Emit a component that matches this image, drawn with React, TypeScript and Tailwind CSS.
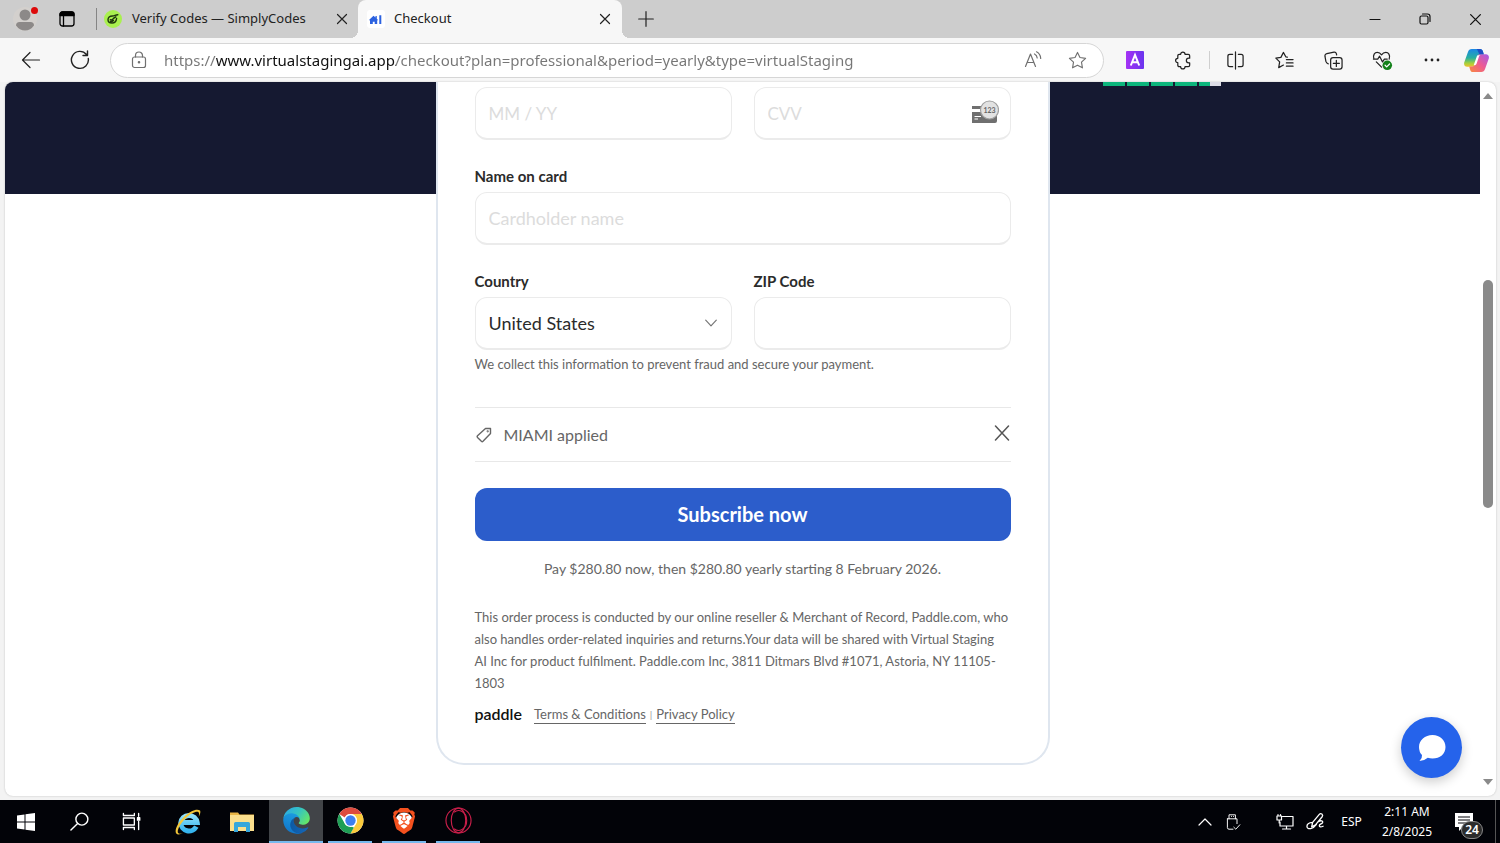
import React from "react";
import { SiBrave } from "react-icons/si";

type IconProps = { className?: string };

function Line({ className = "", children, box = 20, width = 1.2 }: { className?: string; children: React.ReactNode; box?: number; width?: number }) {
  return (
    <svg
      viewBox={`0 0 ${box} ${box}`}
      className={className}
      fill="none"
      stroke="currentColor"
      strokeWidth={width}
      strokeLinecap="round"
      strokeLinejoin="round"
      aria-hidden="true"
    >
      {children}
    </svg>
  );
}

const CloseMark = ({ className }: IconProps) => (
  <Line box={12} className={className}>
    <path d="M1.5 1.5 10.5 10.5M10.5 1.5 1.5 10.5" />
  </Line>
);

function EdgeLogo() {
  return (
    <svg viewBox="0 0 256 260" className="size-[27px]" aria-hidden="true">
      <defs>
        <linearGradient id="edgeA" x1="0" x2="1">
          <stop offset="0" stopColor="#0c59a4" />
          <stop offset="1" stopColor="#1667b7" />
        </linearGradient>
        <linearGradient id="edgeB" x1="0.6" y1="0" x2="0.3" y2="1">
          <stop offset="0" stopColor="#1b9de2" />
          <stop offset="1" stopColor="#1174c8" />
        </linearGradient>
        <linearGradient id="edgeC" x1="0" y1="0.2" x2="1" y2="0.7">
          <stop offset="0" stopColor="#2aa9e8" />
          <stop offset="0.5" stopColor="#36c4c0" />
          <stop offset="1" stopColor="#66e865" />
        </linearGradient>
      </defs>
      <path fill="url(#edgeA)" d="M235.68 195.46a93.73 93.73 0 0 1-10.54 4.71 101.87 101.87 0 0 1-35.9 6.46c-47.32 0-88.54-32.55-88.54-74.32A31.48 31.48 0 0 1 117.13 105c-42.8 1.8-53.8 46.4-53.8 72.53 0 73.88 68.09 81.37 82.76 81.37 7.91 0 19.84-2.3 27-4.56l1.31-.44a128.34 128.34 0 0 0 66.6-52.8 4 4 0 0 0-5.32-5.64z" />
      <path fill="url(#edgeB)" d="M105.73 241.42A79.2 79.2 0 0 1 83 220.08a80.72 80.72 0 0 1 29.49-120c3.12-1.47 8.45-4.13 15.54-4a32.35 32.35 0 0 1 25.69 13 31.88 31.88 0 0 1 6.36 18.66c0-.21 24.46-79.6-80-79.6-43.9 0-80 41.66-80 78.21a130.15 130.15 0 0 0 12.11 56 128 128 0 0 0 156.38 67.11 75.55 75.55 0 0 1-62.78-8z" />
      <path fill="url(#edgeC)" d="M152.33 148.86c-.81 1.05-3.3 2.5-3.3 5.66 0 2.61 1.7 5.12 4.72 7.23 14.38 10 41.49 8.68 41.56 8.68a59.56 59.56 0 0 0 30.27-8.35A61.38 61.38 0 0 0 256 109.19c.26-22.41-8-37.31-11.34-43.91C223.46 23.84 177.72 0 128 0A128 128 0 0 0 0 126.2c.48-36.54 36.8-66.05 80-66.05 3.5 0 23.46.34 42 10.07 16.34 8.58 24.9 18.94 30.85 29.21 6.18 10.67 7.28 24.15 7.28 29.52s-2.74 13.33-7.8 19.91z" />
    </svg>
  );
}

function ChromeLogo() {
  return (
    <svg viewBox="0 0 48 48" className="size-[27px]" aria-hidden="true">
      <circle cx="24" cy="24" r="23" fill="#fff" />
      <path fill="#dd4b3e" d="M24 1a23 23 0 0 1 19.92 11.5H24a11.5 11.5 0 0 0-10.2 6.2L4.08 12.5A23 23 0 0 1 24 1z" />
      <path fill="#1e9e55" d="M4.08 12.5 14.04 29.75A11.5 11.5 0 0 0 25.6 35.4L24 47A23 23 0 0 1 4.08 12.5z" />
      <path fill="#fbcb3c" d="M43.92 12.5A23 23 0 0 1 24 47l9.96-17.25A11.5 11.5 0 0 0 24 12.5z" />
      <path fill="#1e9e55" d="M24 47l6-10.500-4-1.500-9.500-2L18 46.2z" />
      <circle cx="24" cy="24" r="11.5" fill="#fff" />
      <circle cx="24" cy="24" r="9.2" fill="#3d7ff0" />
    </svg>
  );
}

function ExplorerE() {
  return (
    <svg viewBox="0 0 26 26" className="size-[26px]" aria-hidden="true">
      <defs>
        <linearGradient id="ieBlue" x1="0" y1="0" x2="0" y2="1">
          <stop offset="0" stopColor="#8fe0fb" />
          <stop offset="1" stopColor="#35b4ee" />
        </linearGradient>
      </defs>
      <path fill="none" stroke="url(#ieBlue)" strokeWidth="5" d="M7 13.6H22.2A8.3 8.3 0 0 0 5.7 14a8.3 8.3 0 0 0 15.6 3.6" />
      <path fill="#f3c63a" d="M25 1.6C22.4-.8 15.6 1.6 9.3 7.5 2.7 13.7-1 21.6 1.300 24.5c1.200 1.500 3.900 1.100 6.700-.4-2.600.8-4.300.8-5-.3C1.800 21.600 5 14.800 10.700 9.300 16 4.200 21.500 1.800 23.500 3.200c.9.700.8 2.400.1 4.500 1.600-2.600 2.200-5 1.400-6.100z" />
    </svg>
  );
}

function FolderLogo() {
  return (
    <svg viewBox="0 0 24 22" className="h-[22px] w-6" aria-hidden="true">
      <path fill="#e9b544" d="M0 1.500h8l1.500 2H24V8H0z" />
      <path fill="#fbdf8d" d="M0 4h24v16H0z" />
      <path fill="#37a7dc" d="M4 12.500q0-1.500 1.500-1.500h13q1.500 0 1.500 1.500V21h-4v-5H8v5H4z" />
    </svg>
  );
}

function OperaLogo() {
  return (
    <svg viewBox="0 0 28 28" className="size-[27px]" fill="none" stroke="#c91f4a" strokeWidth="1.200" aria-hidden="true">
      <circle cx="14" cy="14" r="13" />
      <ellipse cx="14" cy="14" rx="7.500" ry="12.800" />
      <path d="M9.500 5.500C14 1.500 22.500 4.500 22.500 14S14 26.500 9.500 22.500" />
    </svg>
  );
}

function CopilotLogo() {
  return (
    <svg viewBox="0 0 24 22" className="h-[23px] w-[25px]" aria-hidden="true">
      <defs>
        <linearGradient id="cpA" x1="0" y1="0" x2="0" y2="1">
          <stop offset="0" stopColor="#1a86e6" />
          <stop offset="0.500" stopColor="#27b0a0" />
          <stop offset="0.800" stopColor="#a5cf3c" />
          <stop offset="1" stopColor="#f0c22c" />
        </linearGradient>
        <linearGradient id="cpB" x1="1" y1="0" x2="0" y2="1">
          <stop offset="0" stopColor="#a35be8" />
          <stop offset="0.500" stopColor="#ee5a92" />
          <stop offset="1" stopColor="#f98a3d" />
        </linearGradient>
      </defs>
      <path fill="url(#cpA)" d="M7.500 0h8c1.400 0 2.200.9 2.600 2.200l.9 3h-2.500c-1.600 0-2.500.9-3 2.500l-2.400 7.600c-.4 1.200-1.200 1.700-2.400 1.700H3C.8 17-.3 15.200.2 13L3.800 2.800C4.400 1 5.500 0 7.500 0z" />
      <path fill="url(#cpB)" d="M16.500 22h-8c-1.400 0-2.200-.9-2.600-2.200l-.9-3h2.500c1.600 0 2.500-.9 3-2.500l2.400-7.600c.4-1.200 1.200-1.700 2.400-1.700H21c2.200 0 3.300 1.800 2.800 4l-3.600 10.200c-.6 1.800-1.700 2.800-3.700 2.800z" />
      <path fill="#1d4fc4" d="M15 0c1.600 0 2.600.8 3.100 2.200l.9 2.900h-3.500C14 5 13.500 1 12 0z" />
      <path fill="#fff" d="M12.600 6.200 9.300 15.600c2 0 2.500-.8 3-2.200l1.800-5.300c.3-1.200.9-2 2-2.300z" />
    </svg>
  );
}

function ToolButton({ label, narrow, children }: { label: string; narrow?: boolean; children: React.ReactNode }) {
  return (
    <button
      type="button"
      aria-label={label}
      className={`flex h-9 shrink-0 items-center justify-center text-[#222] ${narrow ? "w-10" : "w-[49px]"}`}
    >
      {children}
    </button>
  );
}

function TabStrip() {
  return (
    <header className="flex h-[38px] shrink-0 items-center bg-[#cdcdcd]">
      <button type="button" aria-label="Profile" className="relative flex w-[50px] justify-center">
        <svg viewBox="0 0 24 24" className="size-6" aria-hidden="true">
          <circle cx="12" cy="12" r="12" fill="#d3d0cd" />
          <circle cx="12" cy="8" r="5.500" fill="#8c8988" />
          <path fill="#8c8988" d="M3 18.500q0-3.500 3.500-3.500h11q3.500 0 3.500 3.500-3.500 5-9 5t-9-5z" />
        </svg>
        <span className="absolute right-3 top-0 size-[7px] rounded-full bg-[#dd0a0a]" />
      </button>
      <button type="button" aria-label="Tab actions" className="flex w-[34px] justify-center text-black">
        <Line className="size-4" box={16} width={1.300}>
          <rect x="1" y="1" width="14" height="14" rx="2.500" />
          <path d="M1 3.500Q1 1 3.500 1h9Q15 1 15 3.500V4.500H1z" fill="currentColor" />
          <path d="M4.500 5v10" />
        </Line>
      </button>
      <span className="ml-3 h-[22px] w-px bg-[#858585]" />
      <nav aria-label="Tabs" className="flex h-full items-center">
        <div className="flex w-[261px] items-center pl-[7px] pr-[7px]">
          <svg viewBox="0 0 18 18" className="size-[18px] shrink-0" aria-hidden="true">
            <circle cx="9" cy="9" r="9" fill="#a9f04f" />
            <path
              d="M13.800 4.800C11.500 4.800 10.500 6 8.500 6 5.500 6 4 7.500 4 9.800S5.500 13 8 13s4.300-1.500 4.600-4.600M6.300 9.800q2 .5 3.200-1.500l2.300-1.500M6.500 11.400q1.800.2 3-1"
              stroke="#20380d"
              strokeWidth="1.400"
              strokeLinecap="round"
              fill="none"
            />
          </svg>
          <a href="#verify" className="ml-[10px] grow whitespace-nowrap font-['Noto_Sans',sans-serif] text-[13px] text-[#222]">
            Verify Codes — SimplyCodes
          </a>
          <button type="button" aria-label="Close Verify Codes" className="flex size-[18px] items-center justify-center text-[#222]">
            <CloseMark className="size-3" />
          </button>
        </div>
        <div className="relative flex h-full w-[264px] items-center rounded-t-lg bg-[#f7f7f7] pl-[9px] pr-2 before:absolute before:-left-2 before:bottom-0 before:size-2 before:bg-[radial-gradient(circle_at_0_0,transparent_8px,#f7f7f7_8px)] after:absolute after:-right-2 after:bottom-0 after:size-2 after:bg-[radial-gradient(circle_at_100%_0,transparent_8px,#f7f7f7_8px)]">
          <svg viewBox="0 0 18 18" className="size-[18px] shrink-0" aria-hidden="true">
            <rect width="18" height="18" rx="3" fill="#fff" />
            <path fill="#2c62e0" d="M2 10 6.500 5.800l2 1.800V6h1.300v2.800L11 10l-.8.600V14H7.700v-2.200H5.800V14H3V10.600zM12.300 5.300h2V14h-2z" />
          </svg>
          <a href="#checkout" className="ml-[9px] grow font-['Noto_Sans',sans-serif] text-[13px] text-[#222]">
            Checkout
          </a>
          <button type="button" aria-label="Close Checkout" className="flex size-[18px] items-center justify-center text-[#222]">
            <CloseMark className="size-3" />
          </button>
        </div>
      </nav>
      <button type="button" aria-label="New tab" className="flex w-12 justify-center text-[#222]">
        <Line className="size-4" box={16}>
          <path d="M8 .7v14.600M.7 8h14.600" />
        </Line>
      </button>
      <div className="ml-auto flex text-[#111]">
        <button type="button" aria-label="Minimize" className="flex w-[50px] justify-center">
          <Line className="size-3" box={12}>
            <path d="M1 6.500h10" />
          </Line>
        </button>
        <button type="button" aria-label="Restore" className="flex w-[50px] justify-center">
          <Line className="size-3" box={12}>
            <rect x="1" y="3" width="8" height="8" rx="1.500" />
            <path d="M3.500 1h5Q11 1 11 3.500v5" />
          </Line>
        </button>
        <button type="button" aria-label="Close window" className="flex w-[50px] justify-center">
          <CloseMark className="size-[13px]" />
        </button>
      </div>
    </header>
  );
}

function Toolbar() {
  return (
    <div className="flex h-11 shrink-0 items-center bg-[#f7f7f7] pl-[6px] pr-1">
      <ToolButton label="Back">
        <Line className="size-5">
          <path d="M18.500 10H1.500M9 2.500 1.500 10 9 17.500" />
        </Line>
      </ToolButton>
      <ToolButton label="Refresh">
        <Line className="size-5" width={1.400}>
          <path d="M18.300 8.500A8.500 8.500 0 1 1 16.500 4.500M17.500 1v4.500H13" />
        </Line>
      </ToolButton>
      <div className="ml-[6px] flex h-[35px] grow items-center rounded-full border border-[#d6d6d6] bg-white pl-[19px] pr-4 text-[#707070]">
        <Line className="size-[18px] shrink-0" box={18}>
          <rect x="2.500" y="6" width="13" height="10.500" rx="2" />
          <path d="M5.500 6V4.500a3.500 3.500 0 0 1 7 0V6" />
          <circle cx="9" cy="11.300" r=".7" fill="currentColor" />
        </Line>
        <input
          type="text"
          aria-label="Address"
          defaultValue="https://www.virtualstagingai.app/checkout?plan=professional&period=yearly&type=virtualStaging"
          className="ml-4 h-7 grow bg-[linear-gradient(to_right,#767676_52px,#111111_52px,#111111_232px,#767676_232px)] bg-clip-text pb-px font-['Noto_Sans',sans-serif] text-[15px] text-transparent outline-none"
        />
        <button type="button" aria-label="Read aloud" className="flex w-[44px] justify-center">
          <Line className="size-[18px]" box={18}>
            <path d="M1.500 15.500 6.500 3l5 12.500M3.200 11.500h6.600M10.500 3q2.500 1.200 2.700 4M12.500.8q4 2 4.200 6.700" />
          </Line>
        </button>
        <button type="button" aria-label="Add to favorites" className="-mr-3 flex w-[44px] justify-center">
          <Line className="size-[19px]">
            <path d="m10 1.500 2.600 5.400 5.900.8-4.300 4.100 1 5.900L10 14.900l-5.200 2.800 1-5.900L1.500 7.700l5.900-.8z" />
          </Line>
        </button>
      </div>
      <div className="ml-[6px] flex items-center">
        <ToolButton label="Assistant extension">
          <svg viewBox="0 0 18 18" className="size-[18px]" aria-hidden="true">
            <defs>
              <linearGradient id="ext" x1="0" x2="1">
                <stop offset="0" stopColor="#a532f5" />
                <stop offset="1" stopColor="#6a34ee" />
              </linearGradient>
            </defs>
            <rect width="18" height="18" rx="1" fill="url(#ext)" />
            <path d="M4.800 14.500 9 4l4.200 10.500M6.200 11.200h5.600" stroke="#fff" strokeWidth="2" fill="none" />
          </svg>
        </ToolButton>
        <ToolButton label="Extensions">
          <Line className="size-[19px]" width={1.300}>
            <path d="M7 3.500a2.300 2.300 0 0 1 4.600 0H15q1.500 0 1.500 1.500v2.500h-1a2.500 2.500 0 0 0 0 5h1V15q0 1.500-1.500 1.500h-3.400a2.300 2.300 0 0 1-4.600 0H5.500Q4 16.500 4 15v-2.700a2.300 2.300 0 0 1 0-4.600V5q0-1.500 1.500-1.500z" />
          </Line>
        </ToolButton>
        <span className="mx-px h-[18px] w-px bg-[#cfcfcf]" />
        <ToolButton label="Split screen">
          <Line className="size-[19px]" width={1.300}>
            <path d="M10 1v18M7 3.500H4Q2 3.500 2 5.500v9q0 2 2 2h3M13 3.500h3q2 0 2 2v9q0 2-2 2h-3" />
          </Line>
        </ToolButton>
        <ToolButton label="Favorites">
          <Line className="size-[19px]" width={1.300}>
            <path d="m13 6.500-1.500-.2L8.800 1.500 6.200 6.700.9 7.500l4 4-1 6 5-2.700M12 9h7M12 12.500h7M12 16h7" />
          </Line>
        </ToolButton>
        <ToolButton label="Collections">
          <Line className="size-[19px]" width={1.300}>
            <rect x="7" y="7" width="12" height="12" rx="2.500" />
            <path d="M13 9.800v6.400M9.800 13h6.400M4.500 13.500Q2.500 13 2 11L1 5.500Q.7 3.300 3 2.800l7.500-1.600q2-.3 2.500 1.500l.3 1.500" />
          </Line>
        </ToolButton>
        <ToolButton label="Browser essentials">
          <Line className="size-[21px]" box={22} width={1.300}>
            <path d="M2 9.500C.5 5 3 2.500 5.500 2.500q2.700 0 4.500 2.500 1.800-2.500 4.500-2.500c2.500 0 5 2.500 3.500 7M1.500 9.500H6l2-3 3 6 2-3h3M4.500 12.500 10 18" />
            <circle cx="16" cy="16" r="5" fill="#13811a" stroke="none" />
            <path d="m13.700 16 1.700 1.700 3-3" stroke="#fff" />
          </Line>
        </ToolButton>
        <ToolButton label="Settings and more">
          <svg viewBox="0 0 16 4" className="h-1 w-4" fill="currentColor" aria-hidden="true">
            <circle cx="2" cy="2" r="1.400" />
            <circle cx="8" cy="2" r="1.400" />
            <circle cx="14" cy="2" r="1.400" />
          </svg>
        </ToolButton>
        <ToolButton label="Copilot" narrow>
          <CopilotLogo />
        </ToolButton>
      </div>
    </div>
  );
}

const field =
  "block h-[53px] w-full rounded-xl border border-b-2 border-[#ebebeb] bg-white px-[13px] text-[#2b2b2b] placeholder-[#dcdcdc] outline-none";
const fieldLabel = "mb-1 mt-6 block text-[15px] font-bold leading-6 text-[#2b2b2b]";

function CheckoutForm() {
  return (
    <form
      className="col-start-1 row-start-1 w-[614px] self-start justify-self-center rounded-b-[28px] border-2 border-t-0 border-[#dfe6ef] bg-white px-[37px] pb-[38px] pt-[5px] font-['Lato',sans-serif]"
      onSubmit={(event) => event.preventDefault()}
    >
      <div className="grid grid-cols-2 gap-x-[22px]">
        <input aria-label="Expiration date" placeholder="MM / YY" className={`${field} text-[17px]`} />
        <div className="relative">
          <input aria-label="Security code" placeholder="CVV" className={`${field} text-[17px]`} />
          <svg viewBox="0 0 28 24" className="absolute right-3 top-[13px] h-6 w-7" aria-hidden="true">
            <path fill="#6f6f6f" d="M1 6h12v3H1zM1 12h25v9q0 2-2 2H1z" />
            <path stroke="#fff" strokeWidth="1.200" d="M3.500 16.500H10M3.500 19H7" />
            <circle cx="18.500" cy="10" r="9" fill="#e2e2e2" stroke="#a0a0a0" strokeWidth="1.200" />
            <text x="18.500" y="12.500" textAnchor="middle" fontSize="7" fontWeight="700" fontFamily="Lato, sans-serif" fill="#666">
              123
            </text>
          </svg>
        </div>
      </div>

      <label htmlFor="holder" className={fieldLabel}>Name on card</label>
      <input id="holder" placeholder="Cardholder name" className={`${field} text-[18px]`} />

      <div className="grid grid-cols-2 gap-x-[22px]">
        <div>
          <label htmlFor="country" className={fieldLabel}>Country</label>
          <div className="relative">
            <select id="country" className={`${field} appearance-none text-[18px]`} defaultValue="US">
              <option value="US">United States</option>
              <option value="ES">Spain</option>
            </select>
            <Line className="pointer-events-none absolute right-[15px] top-5 size-3 text-[#777]" box={12}>
              <path d="M.7 3.200 6 8.800l5.300-5.600" />
            </Line>
          </div>
        </div>
        <div>
          <label htmlFor="zip" className={fieldLabel}>ZIP Code</label>
          <input id="zip" className={`${field} text-[18px]`} />
        </div>
      </div>
      <p className="mt-1 text-[13px] leading-5 text-[#666]">
        We collect this information to prevent fraud and secure your payment.
      </p>

      <div className="mt-[33px] flex h-[55px] items-center border-y border-[#e8e8e8] text-[#666]">
        <Line className="ml-px size-4" box={16} width={1.400}>
          <path d="M9.500 1.500h5v5L7 14.300q-.8.700-1.600 0L1.500 10.400q-.7-.8 0-1.600z" />
          <circle cx="11.700" cy="4.300" r=".4" />
        </Line>
        <span className="ml-3 grow text-[16px]">MIAMI applied</span>
        <button type="button" aria-label="Remove discount" className="px-px pb-1 text-[#555]">
          <Line className="size-4" box={16} width={1.500}>
            <path d="M1.500 1 14.500 15M14.500 1 1.500 15" />
          </Line>
        </button>
      </div>

      <button type="submit" className="mt-[26px] h-[53px] w-full rounded-xl bg-[#2c5dcb] pb-[2px] text-[20px] font-bold text-white">
        Subscribe now
      </button>
      <p className="mt-[17px] text-center text-[14px] leading-[22px] text-[#666]">
        Pay $280.80 now, then $280.80 yearly starting 8 February 2026.
      </p>
      <p className="mt-[26px] text-[13px] leading-[22px] text-[#666]">
        This order process is conducted by our online reseller &amp; Merchant of Record, Paddle.com, who also handles
        order-related inquiries and returns.Your data will be shared with Virtual Staging AI&nbsp;Inc for product
        fulfilment. Paddle.com Inc, 3811 Ditmars Blvd #1071, Astoria, NY 11105-1803
      </p>
      <div className="mt-[9px] flex h-[22px] items-center text-[13px] leading-[18px] text-[#666]">
        <span className="mr-3 text-[16px] font-semibold text-[#111]">paddle</span>
        <a href="#terms" className="border-b border-[#666]">Terms &amp; Conditions</a>
        <span className="mx-1 text-[10px] text-[#999]">|</span>
        <a href="#privacy" className="border-b border-[#666]">Privacy Policy</a>
      </div>
    </form>
  );
}

function Viewport() {
  return (
    <div className="min-h-0 grow bg-[#f3f3f3] pb-1 pl-[5px] pr-1">
      <div className="relative flex h-full overflow-hidden rounded-lg bg-white shadow-[0_0_2px_#bbb]">
        <main className="grid grow content-start">
          <div className="col-start-1 row-start-1 flex h-28 items-start justify-end gap-[2px] bg-[#151931] pr-[259px]">
            {["a", "b", "c", "d"].map((star) => (
              <span key={star} className="h-1 w-[22px] bg-[#0cb57c]" />
            ))}
            <span className="flex h-1 w-[22px] bg-[#dcdce6]">
              <span className="w-1/2 bg-[#0cb57c]" />
            </span>
          </div>
          <CheckoutForm />
        </main>
        <div className="flex w-4 shrink-0 flex-col items-center py-[11px]">
          <svg viewBox="0 0 10 6" className="h-[6px] w-[10px]" aria-hidden="true">
            <path fill="#8a8a8a" d="M5 0l5 6H0z" />
          </svg>
          <div className="flex-[181]" />
          <div className="w-[10px] flex-[228] rounded-full bg-[#8a8a8a]" />
          <div className="flex-[271]" />
          <svg viewBox="0 0 10 6" className="h-[6px] w-[10px]" aria-hidden="true">
            <path fill="#8a8a8a" d="M5 6l5-6H0z" />
          </svg>
        </div>
        <button
          type="button"
          aria-label="Open chat"
          className="absolute bottom-[18px] right-[34px] flex size-[61px] items-center justify-center rounded-full bg-[#2563eb] shadow-[0_4px_12px_rgba(0,0,0,0.2)]"
        >
          <svg viewBox="0 0 28 26" className="h-[26px] w-7" aria-hidden="true">
            <path fill="#fff" d="M14.500 0C22 0 27.500 5 27.500 12S22 23.500 14.500 23.500q-2.500 0-4.700-.7Q6.500 25.800 1.500 26q3-3 2.500-6Q1 17 1 12C1 5 7 0 14.500 0z" />
          </svg>
        </button>
      </div>
    </div>
  );
}

function TaskButton({ label, running, active, children }: { label: string; running?: boolean; active?: boolean; children: React.ReactNode }) {
  return (
    <button
      type="button"
      aria-label={label}
      className={`flex h-full w-[54px] flex-col items-center ${active ? "bg-[#414448]" : ""}`}
    >
      <span className="flex grow items-center">{children}</span>
      {running && <span className={`h-[2px] ${active ? "w-full" : "w-11"} bg-[#76b9ed]`} />}
    </button>
  );
}

function Taskbar() {
  return (
    <footer className="flex h-[43px] shrink-0 items-center bg-[#020308] text-white">
      <div className="mr-[3px] flex h-full w-[158px]">
        <TaskButton label="Start">
          <svg viewBox="0 0 18 18" className="size-[18px]" fill="#fff" aria-hidden="true">
            <path d="M0 2.500 7.500 1.500v7H0zM8.500 1.300 18 0v8.500H8.500zM0 9.500h7.500v7L0 15.500zM8.500 9.500H18V18l-9.500-1.300z" />
          </svg>
        </TaskButton>
        <TaskButton label="Search">
          <Line className="size-[19px]" width={1.500}>
            <circle cx="12.500" cy="7.500" r="6.300" />
            <path d="M8 12 1 19" />
          </Line>
        </TaskButton>
        <TaskButton label="Task view">
          <Line className="size-[19px]" width={1.400}>
            <path d="M1.500 1.500v2.200h11.500V1.500M1.500 18.500v-2.200h11.500v2.200M17.500 1.500v3M17.500 10v8.500" />
            <rect x="1.500" y="6.300" width="11.500" height="7.400" />
            <rect x="16.300" y="6" width="2.400" height="2.600" fill="currentColor" />
          </Line>
        </TaskButton>
      </div>
      <TaskButton label="Internet Explorer">
        <ExplorerE />
      </TaskButton>
      <TaskButton label="File Explorer">
        <FolderLogo />
      </TaskButton>
      <TaskButton label="Edge" running active>
        <EdgeLogo />
      </TaskButton>
      <TaskButton label="Chrome" running>
        <ChromeLogo />
      </TaskButton>
      <TaskButton label="Brave" running>
        <span className="flex items-center justify-center bg-[radial-gradient(circle,#fff_8px,transparent_9px)]">
          <SiBrave className="size-[26px] text-[#f4511e]" />
        </span>
      </TaskButton>
      <TaskButton label="Opera" running>
        <OperaLogo />
      </TaskButton>

      <div className="ml-auto flex h-full items-center font-['Noto_Sans',sans-serif] text-[12px]">
        <button type="button" aria-label="Show hidden icons" className="flex w-7 justify-center">
          <Line className="size-[14px]" box={14}>
            <path d="M1 10l6-6 6 6" />
          </Line>
        </button>
        <button type="button" aria-label="USB device" className="flex w-[51px] pl-[6px]">
          <Line className="h-5 w-4" box={20}>
            <path d="M5 6V1h8v5M8 3h.2M10.500 3h.2M3 6h12v6M3 6v11q0 2 2 2h5M11 16.500l2.500 2.500 5-5.500" />
          </Line>
        </button>
        <button type="button" aria-label="Network" className="flex w-[29px] justify-center">
          <Line className="size-[18px]" box={18}>
            <path d="M6.500 3.500H17v9.500H4V9M10.500 13v3M6.500 16h8" />
            <path d="M1 3h4.500v4H1zM2 3V1.500M4.500 3V1.500M3.200 7v3" />
          </Line>
        </button>
        <button type="button" aria-label="Ink workspace" className="flex w-8 justify-center">
          <Line className="size-[19px]" width={1.400}>
            <path d="M6 15.500 7 11 14 2.500q1.200-1.500 2.700-.3T17 5L10 13.500zM7 11q-6 .5-6 4 0 3 4 2.500 3-.5 6-4.500M12.500 10.500c3-2 5.500-1.500 5 .5-.5 1.700-3.500 1.500-3.500 3.500 0 1.500 2 1.500 4 .5" />
          </Line>
        </button>
        <button type="button" className="w-[41px] text-[12px]">ESP</button>
        <button type="button" className="w-[70px] text-center leading-5">
          <time className="block">2:11 AM</time>
          <time className="block">2/8/2025</time>
        </button>
        <button type="button" aria-label="Notifications" className="relative flex h-full w-[53px] items-center pl-[13px]">
          <svg viewBox="0 0 18 18" className="size-[18px]" aria-hidden="true">
            <path fill="#fff" d="M0 0h18v14H8l-4 4v-4H0z" />
            <path stroke="#020308" strokeWidth="1.200" d="M3 4h12M3 7h12M3 10h8" />
          </svg>
          <span className="absolute bottom-1 right-3 flex h-[18px] w-[22px] items-center justify-center rounded-full border border-[#888] bg-[#2c2c2c] text-[12px] font-semibold">
            24
          </span>
        </button>
        <span className="mr-1 h-full w-px bg-[#555]" />
      </div>
    </footer>
  );
}

export default function App() {
  return (
    <div className="flex h-screen flex-col overflow-hidden bg-[#f7f7f7]">
      <TabStrip />
      <Toolbar />
      <Viewport />
      <Taskbar />
    </div>
  );
}
